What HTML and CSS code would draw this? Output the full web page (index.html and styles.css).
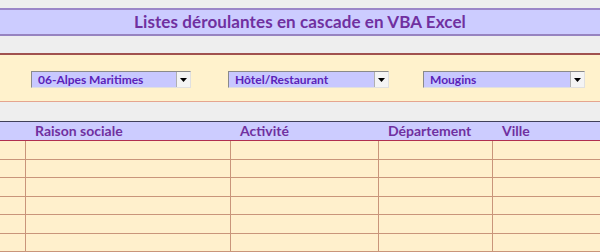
FILE: index.html
```html
<!DOCTYPE html>
<html lang="fr">
<head>
<meta charset="utf-8">
<link rel="stylesheet" href="styles.css">
</head>
<body>
<div class="sheet">
  <div class="gap-top"></div>
  <div class="title">Listes déroulantes en cascade en VBA Excel</div>
  <div class="gap-mid"></div>
  <div class="filters">
    <div class="combo c1"><span class="val">06-Alpes Maritimes</span><span class="btn"><svg width="7" height="4" viewBox="0 0 7 4"><path d="M0 0h7L3.5 4z" fill="#000"/></svg></span></div>
    <div class="combo c2"><span class="val">Hôtel/Restaurant</span><span class="btn"><svg width="7" height="4" viewBox="0 0 7 4"><path d="M0 0h7L3.5 4z" fill="#000"/></svg></span></div>
    <div class="combo c3"><span class="val">Mougins</span><span class="btn"><svg width="7" height="4" viewBox="0 0 7 4"><path d="M0 0h7L3.5 4z" fill="#000"/></svg></span></div>
  </div>
  <div class="gap-low"></div>
  <div class="grid">
    <div class="hd first"></div>
    <div class="hd">Raison sociale</div>
    <div class="hd">Activité</div>
    <div class="hd">Département</div>
    <div class="hd">Ville</div>
    <div class="cell first"></div><div class="cell"></div><div class="cell"></div><div class="cell"></div><div class="cell"></div>
    <div class="cell first"></div><div class="cell"></div><div class="cell"></div><div class="cell"></div><div class="cell"></div>
    <div class="cell first"></div><div class="cell"></div><div class="cell"></div><div class="cell"></div><div class="cell"></div>
    <div class="cell first"></div><div class="cell"></div><div class="cell"></div><div class="cell"></div><div class="cell"></div>
    <div class="cell first"></div><div class="cell"></div><div class="cell"></div><div class="cell"></div><div class="cell"></div>
    <div class="cell first"></div><div class="cell"></div><div class="cell"></div><div class="cell"></div><div class="cell"></div>
  </div>
</div>
</body>
</html>
```
FILE: styles.css
```css
html, body {
  margin: 0;
  padding: 0;
  background: #eeeeee;
}
.sheet {
  width: 600px;
  height: 252px;
  overflow: hidden;
  font-family: Lato, "Open Sans", sans-serif;
  font-weight: 700;
}
.gap-top { height: 8px; }
.title {
  height: 24px;
  background: #ccccff;
  border-top: 2px solid #9b86c8;
  border-bottom: 2px solid #9683c0;
  color: #7030a0;
  font-size: 17px;
  line-height: 24px;
  text-align: center;
  letter-spacing: 0.1px;
}
.gap-mid { height: 17px; }
.filters {
  height: 30px;
  background: #fff2cc;
  border-top: 2px solid #a0524f;
  border-bottom: 1px solid #e5a58f;
  display: flex;
  align-items: flex-start;
  padding-top: 16px;
}
.combo {
  height: 15px;
  background: #c8c8ff;
  border-top: 1px solid #8a8a8a;
  border-left: 1px solid #8a8a8a;
  border-right: 1px solid #e0e0e0;
  border-bottom: 1px solid #e0e0e0;
  display: flex;
  align-items: center;
  justify-content: space-between;
  color: #5a22b8;
  font-size: 12px;
}
.c1 { margin-left: 31px; width: 158px; }
.c2 { margin-left: 37px; width: 159px; }
.c3 { margin-left: 34px; width: 160px; }
.val { padding-left: 6px; line-height: 15px; }
.btn {
  width: 13px;
  height: 15px;
  background: #f4f4f4;
  border-left: 1px solid #b0b0b0;
  display: flex;
  align-items: center;
  justify-content: center;
}
.gap-low { height: 19px; }
.grid {
  display: grid;
  grid-template-columns: 25px 205px 148px 114px 108px;
  grid-template-rows: 19px repeat(6, 18.5px);
  border-top: 1px solid #40405a;
}
.hd {
  background: #ccccff;
  border-bottom: 1px solid #b03050;
  color: #7030a0;
  font-size: 14px;
  line-height: 18px;
  padding-left: 10px;
  white-space: nowrap;
}
.hd.first { padding-left: 0; }
.cell {
  background: #fff0cc;
  border-left: 1px solid #c9957a;
  border-bottom: 1px solid #c9957a;
}
.cell.first { border-left: none; }
```
